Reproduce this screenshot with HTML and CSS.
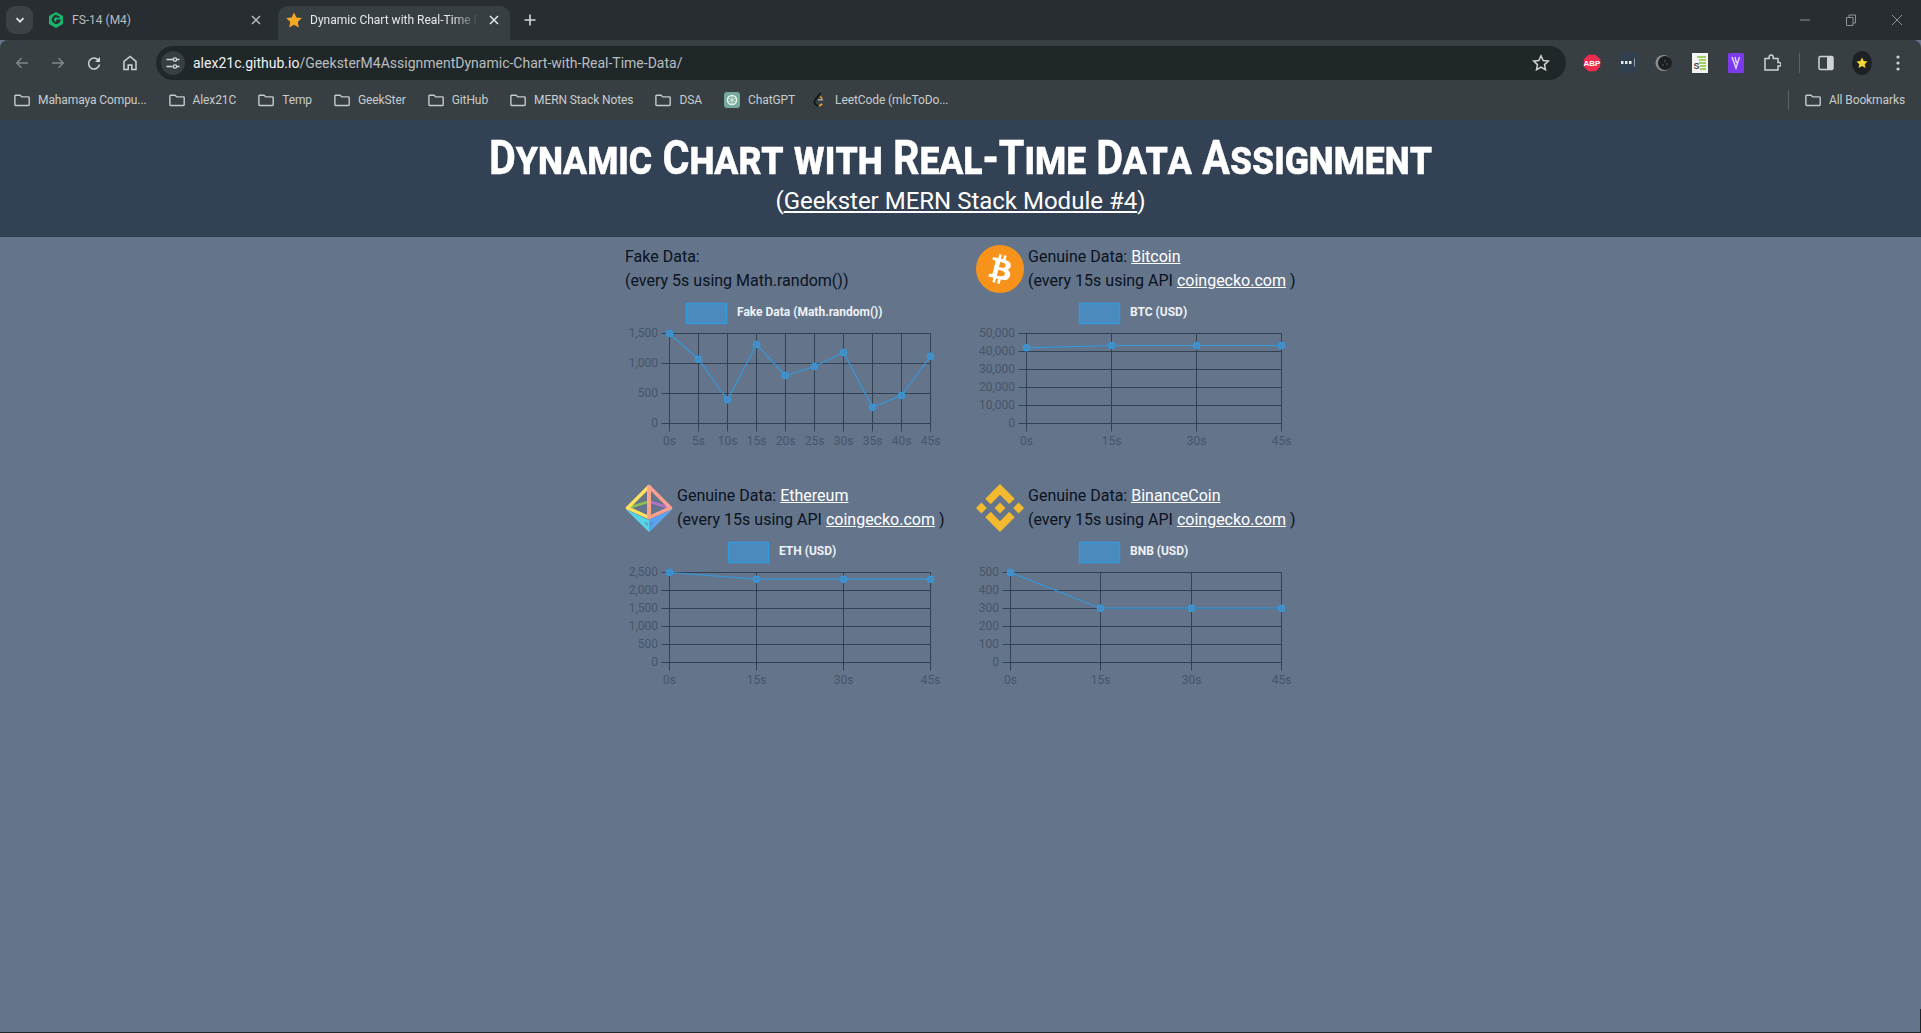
FILE: index.html
```html
<!DOCTYPE html>
<html lang="en">
<head>
<meta charset="utf-8">
<title>Dynamic Chart with Real-Time Data Assignment</title>
<link rel="stylesheet" href="styles.css">
</head>
<body>
<svg class="defs" width="0" height="0" aria-hidden="true">
  <symbol id="folder" viewBox="0 0 16 16"><path d="M1.5 3.2h4.6l1.6 1.7h6.8c.4 0 .7.3.7.7v7.2c0 .4-.3.7-.7.7H1.6c-.4 0-.7-.3-.7-.7V3.8c0-.3.3-.6.6-.6z" fill="none" stroke="#c6cacb" stroke-width="1.4"/></symbol>
  <symbol id="close" viewBox="0 0 16 16"><path d="M4 4l8 8M12 4l-8 8" fill="none" stroke="currentColor" stroke-width="1.5"/></symbol>
</svg>

<div class="tabstrip">
  <div class="tabsearch"><svg width="12" height="12" viewBox="0 0 12 12"><path d="M2.5 4.2L6 7.7l3.5-3.5" fill="none" stroke="#e3e5e6" stroke-width="1.7"/></svg></div>
  <div class="tab">
    <svg class="favicon" viewBox="0 0 16 16"><path d="M8 0l7 4v8l-7 4-7-4V4z" fill="#19b56f"/><path d="M11 5.800A3.300 3.300 0 1 0 11.300 8.600H8.300" fill="none" stroke="#272d30" stroke-width="2.200"/></svg>
    <span class="tab-title">FS-14 (M4)</span>
    <svg class="tab-close"><use href="#close"/></svg>
  </div>
  <div class="tab tab-active">
    <svg class="favicon" viewBox="0 0 16 16"><path d="M8 .4l2.400 5 5.400.7-4 3.800 1 5.500L8 12.700l-4.800 2.700 1-5.500-4-3.800 5.400-.7z" fill="#f5a623"/></svg>
    <span class="tab-title tab-fade">Dynamic Chart with Real-Time Data Assignment</span>
    <svg class="tab-close"><use href="#close"/></svg>
  </div>
  <div class="newtab"><svg width="16" height="16" viewBox="0 0 16 16"><path d="M8 2.500v11M2.500 8h11" stroke="#d5d8d9" stroke-width="1.600"/></svg></div>
  <div class="winctl">
    <svg width="16" height="16" viewBox="0 0 16 16"><path d="M3 8h10" stroke="#8d9294" stroke-width="1"/></svg>
    <svg width="16" height="16" viewBox="0 0 16 16"><path d="M3.500 5.500h6.500v8H3.500zM6 5.500V3h6.500v8H10" fill="none" stroke="#8d9294" stroke-width="1"/></svg>
    <svg width="16" height="16" viewBox="0 0 16 16"><path d="M3 3l10 10M13 3L3 13" stroke="#8d9294" stroke-width="1"/></svg>
  </div>
</div>

<div class="toolbar">
  <div class="tbtn"><svg width="16" height="16" viewBox="0 0 16 16"><path d="M14 8H3M7.500 3.200L2.700 8l4.800 4.800" fill="none" stroke="#80878a" stroke-width="1.500"/></svg></div>
  <div class="tbtn"><svg width="16" height="16" viewBox="0 0 16 16"><path d="M2 8h11M8.500 3.200L13.300 8l-4.800 4.800" fill="none" stroke="#80878a" stroke-width="1.500"/></svg></div>
  <div class="tbtn"><svg width="16" height="16" viewBox="0 0 16 16"><path d="M13.200 6.500A5.500 5.500 0 1 0 13.500 9.500" fill="none" stroke="#d0d3d4" stroke-width="1.500"/><path d="M14 2v5H9z" fill="#d0d3d4"/></svg></div>
  <div class="tbtn"><svg width="16" height="16" viewBox="0 0 16 16"><path d="M8 1.500L2 6.300V14.500h4.200v-4.500h3.600v4.500H14V6.300z" fill="none" stroke="#d0d3d4" stroke-width="1.500"/></svg></div>
  <div class="omnibox">
    <div class="sitechip"><svg width="16" height="16" viewBox="0 0 16 16"><path d="M1.500 4.500h7M1.500 11.500h6M12 11.500h2.500M11.500 4.500h3" stroke="#d5d8d9" stroke-width="1.400"/><circle cx="10" cy="4.500" r="1.700" fill="none" stroke="#d5d8d9" stroke-width="1.300"/><circle cx="10" cy="11.500" r="1.700" fill="none" stroke="#d5d8d9" stroke-width="1.300"/></svg></div>
    <span class="url"><span class="url-host">alex21c.github.io</span>/GeeksterM4AssignmentDynamic-Chart-with-Real-Time-Data/</span>
    <svg class="omni-star" width="18" height="18" viewBox="0 0 18 18"><path d="M9 1.800l2.200 4.700 5.100.6-3.800 3.500 1 5.100L9 13.200l-4.500 2.500 1-5.100-3.800-3.500 5.100-.6z" fill="none" stroke="#d0d3d4" stroke-width="1.500"/></svg>
  </div>
  <div class="extensions">
    <div class="tbtn"><svg width="18" height="18" viewBox="0 0 18 18"><path d="M5.300 .8h7.400L17.200 5.300v7.400l-4.500 4.500H5.300L.8 12.700V5.300z" fill="#ee2a4f"/><text class="ext-abp" x="9" y="12" text-anchor="middle">ABP</text></svg></div>
    <div class="tbtn"><svg width="18" height="20" viewBox="0 0 18 20"><rect width="18" height="20" rx="1" fill="#2f3f4e"/><path d="M2 8h2.500v3H2zM6 8h2.500v3H6zM10 8h2.500v3H10z" fill="#e6e8e9"/><path d="M15.500 5.500v8" stroke="#9aa3a8" stroke-width="1"/></svg></div>
    <div class="tbtn"><svg width="18" height="20" viewBox="0 0 18 20"><circle cx="8.500" cy="10" r="8" fill="#8a8f90"/><circle cx="10" cy="10" r="7" fill="#1c1d1f"/><circle cx="10" cy="8" r=".8" fill="#666"/><circle cx="12" cy="11" r=".8" fill="#666"/><circle cx="8" cy="12" r=".8" fill="#666"/></svg></div>
    <div class="tbtn"><svg width="16" height="20" viewBox="0 0 16 20"><rect width="16" height="20" fill="#f4f5f2"/><path d="M5 4h9M7 7h7M7 10h7M8 13h6M8 16h6" stroke="#86c232" stroke-width="1.300"/><text class="ext-s" x="1.500" y="16">S</text></svg></div>
    <div class="tbtn"><svg width="16" height="20" viewBox="0 0 16 20"><rect width="16" height="20" rx="1.500" fill="#7c3aed"/><path d="M4 4l4 11 3.500-11M7 4l1.500 6" fill="none" stroke="#e3d7ff" stroke-width="1.400"/></svg></div>
    <div class="tbtn"><svg width="18" height="18" viewBox="0 0 18 18"><path d="M2 4.500h4.200V3a2 2 0 0 1 4 0v1.500H15v4h1.200a1.800 1.800 0 0 1 0 3.600H15V16H2z" fill="none" stroke="#d0d3d4" stroke-width="1.500"/></svg></div>
    <div class="tsep"></div>
    <div class="tbtn"><svg width="16" height="16" viewBox="0 0 16 16"><rect x="1" y="1.500" width="14" height="13" rx="1.500" fill="none" stroke="#d0d3d4" stroke-width="1.500"/><rect x="9" y="1.500" width="6" height="13" fill="#d0d3d4"/></svg></div>
    <div class="tbtn"><svg width="20" height="24" viewBox="0 0 20 24"><ellipse cx="10" cy="12" rx="10" ry="12" fill="#1d2123"/><path d="M10 6.500l1.700 3.600 3.800.5-2.800 2.600.8 3.800-3.500-1.900-3.500 1.900.8-3.800L4.500 10.600l3.800-.5z" fill="#f7d731"/></svg></div>
    <div class="tbtn"><svg width="6" height="18" viewBox="0 0 6 18"><circle cx="3" cy="3" r="1.600" fill="#d0d3d4"/><circle cx="3" cy="9" r="1.600" fill="#d0d3d4"/><circle cx="3" cy="15" r="1.600" fill="#d0d3d4"/></svg></div>
  </div>
</div>

<div class="bookmarks">
  <div class="bm"><svg class="bm-icon"><use href="#folder"/></svg><span>Mahamaya Compu...</span></div>
  <div class="bm"><svg class="bm-icon"><use href="#folder"/></svg><span>Alex21C</span></div>
  <div class="bm"><svg class="bm-icon"><use href="#folder"/></svg><span>Temp</span></div>
  <div class="bm"><svg class="bm-icon"><use href="#folder"/></svg><span>GeekSter</span></div>
  <div class="bm"><svg class="bm-icon"><use href="#folder"/></svg><span>GitHub</span></div>
  <div class="bm"><svg class="bm-icon"><use href="#folder"/></svg><span>MERN Stack Notes</span></div>
  <div class="bm"><svg class="bm-icon"><use href="#folder"/></svg><span>DSA</span></div>
  <div class="bm"><svg class="bm-icon" viewBox="0 0 16 16"><rect width="16" height="16" rx="3" fill="#74aa9c"/><circle cx="8" cy="8" r="4.600" fill="none" stroke="#e8f1ee" stroke-width="1.500"/><path d="M8 3.500v9M4 5.700l8 4.600M12 5.700l-8 4.600" stroke="#e8f1ee" stroke-width=".8"/></svg><span>ChatGPT</span></div>
  <div class="bm bm-leet"><svg class="bm-icon" viewBox="0 0 16 16"><path d="M9.500 1L4 8c-1.500 2.200 0 5.500 3.500 6" fill="none" stroke="#111" stroke-width="1.500"/><path d="M7 7.800h5" stroke="#b4b8b9" stroke-width="1.300"/><path d="M9 4.500l2.300 2M8 14l3.300-2" stroke="#f5a623" stroke-width="1.500"/></svg><span>LeetCode (mlcToDo...</span></div>
  <div class="bm-right">
    <div class="bm-sep"></div>
    <div class="bm"><svg class="bm-icon"><use href="#folder"/></svg><span>All Bookmarks</span></div>
  </div>
</div>

<header class="page-header">
  <h1 class="title">Dynamic Chart with Real-Time Data Assignment</h1>
  <p class="subtitle">(<a href="#">Geekster MERN Stack Module #4</a>)</p>
</header>

<main class="charts">

  <section class="cell">
    <div class="cell-head">
      <div class="cell-text">
        <div>Fake Data:</div>
        <div>(every 5s using Math.random())</div>
      </div>
    </div>
    <svg class="chart" viewBox="0 0 319 160">
      <rect class="legend-box" x="61.500" y="10.500" width="40" height="20"/>
      <text class="legend-text" x="112" y="22.500">Fake Data (Math.random())</text>
      <path class="grid" d="M36.500 40.500H305.500M36.500 70.500H305.500M36.500 100.500H305.500M36.500 130.500H305.500M44.500 40.500V138.500M73.500 40.500V138.500M102.500 40.500V138.500M131.500 40.500V138.500M160.500 40.500V138.500M189.500 40.500V138.500M218.500 40.500V138.500M247.500 40.500V138.500M276.500 40.500V138.500M305.500 40.500V138.500"/>
      <g class="ylabels">
        <text x="33" y="43.500">1,500</text><text x="33" y="73.500">1,000</text><text x="33" y="103.500">500</text><text x="33" y="133.500">0</text>
      </g>
      <g class="xlabels">
        <text x="44.500" y="152">0s</text><text x="73.500" y="152">5s</text><text x="102.500" y="152">10s</text><text x="131.500" y="152">15s</text><text x="160.500" y="152">20s</text><text x="189.500" y="152">25s</text><text x="218.500" y="152">30s</text><text x="247.500" y="152">35s</text><text x="276.500" y="152">40s</text><text x="305.500" y="152">45s</text>
      </g>
      <polyline class="line" points="44.500,40.500 73.500,66.200 102.500,106.800 131.500,51.500 160.500,82.500 189.500,73.500 218.500,59.500 247.500,114.200 276.500,102.500 305.500,63.200"/>
      <g class="points">
        <circle cx="44.500" cy="40.500" r="3"/><circle cx="73.500" cy="66.200" r="3"/><circle cx="102.500" cy="106.800" r="3"/><circle cx="131.500" cy="51.500" r="3"/><circle cx="160.500" cy="82.500" r="3"/><circle cx="189.500" cy="73.500" r="3"/><circle cx="218.500" cy="59.500" r="3"/><circle cx="247.500" cy="114.200" r="3"/><circle cx="276.500" cy="102.500" r="3"/><circle cx="305.500" cy="63.200" r="3"/>
      </g>
    </svg>
  </section>

  <section class="cell">
    <div class="cell-head">
      <svg class="coin" viewBox="0 0 32 32"><circle cx="16" cy="16" r="16" fill="#f7931a"/><path fill="#fff" d="M23.189 14.020c.314-2.096-1.283-3.223-3.465-3.975l.708-2.840-1.728-.430-.690 2.765c-.454-.114-.920-.220-1.385-.326l.695-2.783L15.596 6l-.708 2.839c-.376-.086-.746-.170-1.104-.260l.002-.009-2.384-.595-.460 1.846s1.283.294 1.256.312c.700.175.826.638.805 1.006l-.806 3.235c.048.012.110.030.180.057l-.183-.045-1.130 4.532c-.086.212-.303.531-.793.410.018.025-1.256-.313-1.256-.313l-.858 1.978 2.250.561c.418.105.828.215 1.231.318l-.715 2.872 1.727.430.708-2.840c.472.127.930.245 1.378.357l-.706 2.828 1.728.430.715-2.866c2.948.558 5.164.333 6.097-2.333.752-2.146-.037-3.385-1.588-4.192 1.130-.260 1.980-1.003 2.207-2.538zm-3.950 5.538c-.533 2.147-4.148.986-5.320.695l.950-3.805c1.172.293 4.929.872 4.370 3.110zm.535-5.569c-.487 1.953-3.495.960-4.470.717l.860-3.450c.975.243 4.118.696 3.610 2.733z"/></svg>
      <div class="cell-text">
        <div>Genuine Data: <a href="#">Bitcoin</a></div>
        <div>(every 15s using API <a href="#">coingecko.com</a> )</div>
      </div>
    </div>
    <svg class="chart" viewBox="0 0 319 160">
      <rect class="legend-box" x="103.500" y="10.500" width="40" height="20"/>
      <text class="legend-text" x="154" y="22.500">BTC (USD)</text>
      <path class="grid" d="M42.500 40.500H305.500M42.500 58.500H305.500M42.500 76.500H305.500M42.500 94.500H305.500M42.500 112.500H305.500M42.500 130.500H305.500M50.500 40.500V138.500M135.500 40.500V138.500M220.500 40.500V138.500M305.500 40.500V138.500"/>
      <g class="ylabels">
        <text x="39" y="43.500">50,000</text><text x="39" y="61.500">40,000</text><text x="39" y="79.500">30,000</text><text x="39" y="97.500">20,000</text><text x="39" y="115.500">10,000</text><text x="39" y="133.500">0</text>
      </g>
      <g class="xlabels">
        <text x="50.500" y="152">0s</text><text x="135.500" y="152">15s</text><text x="220.500" y="152">30s</text><text x="305.500" y="152">45s</text>
      </g>
      <polyline class="line" points="50.500,54.800 135.500,52.500 220.500,52.500 305.500,52.500"/>
      <g class="points">
        <circle cx="50.500" cy="54.800" r="3"/><circle cx="135.500" cy="52.500" r="3"/><circle cx="220.500" cy="52.500" r="3"/><circle cx="305.500" cy="52.500" r="3"/>
      </g>
    </svg>
  </section>

  <section class="cell">
    <div class="cell-head">
      <svg class="coin" viewBox="0 0 48 48">
        <path d="M1 25.500L24 48 47 25.500 24 36z" fill="#54d6e8"/>
        <path d="M47 25.500L24 48V36z" fill="#5aa2f0"/>
        <path d="M19 37.500l3.500 1.200v3.800z" fill="#64748b" opacity=".6"/>
        <path d="M29 37.500l-3.500 1.200v3.800z" fill="#64748b" opacity=".6"/>
        <path d="M3 24l21-6.500" fill="none" stroke="#8fc04f" stroke-width="2.500"/>
        <path d="M45 24l-21-6.500" fill="none" stroke="#b56fc8" stroke-width="2.500"/>
        <path d="M24 2.500L2.500 24 24 33.500z" fill="none" stroke="#ffe25f" stroke-width="3.500" stroke-linejoin="round"/>
        <path d="M24 2.500L45.500 24 24 33.500z" fill="none" stroke="#ff9f8f" stroke-width="3.500" stroke-linejoin="round"/>
      </svg>
      <div class="cell-text">
        <div>Genuine Data: <a href="#">Ethereum</a></div>
        <div>(every 15s using API <a href="#">coingecko.com</a> )</div>
      </div>
    </div>
    <svg class="chart" viewBox="0 0 319 160">
      <rect class="legend-box" x="103.500" y="10.500" width="40" height="20"/>
      <text class="legend-text" x="154" y="22.500">ETH (USD)</text>
      <path class="grid" d="M36.500 40.500H305.500M36.500 58.500H305.500M36.500 76.500H305.500M36.500 94.500H305.500M36.500 112.500H305.500M36.500 130.500H305.500M44.500 40.500V138.500M131.500 40.500V138.500M218.500 40.500V138.500M305.500 40.500V138.500"/>
      <g class="ylabels">
        <text x="33" y="43.500">2,500</text><text x="33" y="61.500">2,000</text><text x="33" y="79.500">1,500</text><text x="33" y="97.500">1,000</text><text x="33" y="115.500">500</text><text x="33" y="133.500">0</text>
      </g>
      <g class="xlabels">
        <text x="44.500" y="152">0s</text><text x="131.500" y="152">15s</text><text x="218.500" y="152">30s</text><text x="305.500" y="152">45s</text>
      </g>
      <polyline class="line" points="44.500,40.500 131.500,47.200 218.500,47.200 305.500,47.200"/>
      <g class="points">
        <circle cx="44.500" cy="40.500" r="3"/><circle cx="131.500" cy="47.200" r="3"/><circle cx="218.500" cy="47.200" r="3"/><circle cx="305.500" cy="47.200" r="3"/>
      </g>
    </svg>
  </section>

  <section class="cell">
    <div class="cell-head">
      <svg class="coin" viewBox="0 0 24 24"><path fill="#f3ba2f" d="M16.624 13.920l2.717 2.716-7.353 7.353-7.353-7.352 2.717-2.717 4.636 4.660 4.636-4.660zm4.637-4.636L24 12l-2.715 2.716L18.568 12l2.693-2.716zm-9.272.001l2.716 2.691-2.716 2.718v-.001L9.272 12l2.716-2.715zm-9.272-.001L5.409 12l-2.692 2.692L0 12l2.716-2.716zM11.988.011l7.353 7.329-2.717 2.716-4.636-4.636-4.635 4.660-2.718-2.716 7.353-7.353z"/></svg>
      <div class="cell-text">
        <div>Genuine Data: <a href="#">BinanceCoin</a></div>
        <div>(every 15s using API <a href="#">coingecko.com</a> )</div>
      </div>
    </div>
    <svg class="chart" viewBox="0 0 319 160">
      <rect class="legend-box" x="103.500" y="10.500" width="40" height="20"/>
      <text class="legend-text" x="154" y="22.500">BNB (USD)</text>
      <path class="grid" d="M26.500 40.500H305.500M26.500 58.500H305.500M26.500 76.500H305.500M26.500 94.500H305.500M26.500 112.500H305.500M26.500 130.500H305.500M34.500 40.500V138.500M124.500 40.500V138.500M215.500 40.500V138.500M305.500 40.500V138.500"/>
      <g class="ylabels">
        <text x="23" y="43.500">500</text><text x="23" y="61.500">400</text><text x="23" y="79.500">300</text><text x="23" y="97.500">200</text><text x="23" y="115.500">100</text><text x="23" y="133.500">0</text>
      </g>
      <g class="xlabels">
        <text x="34.500" y="152">0s</text><text x="124.500" y="152">15s</text><text x="215.500" y="152">30s</text><text x="305.500" y="152">45s</text>
      </g>
      <polyline class="line" points="34.500,40.500 124.500,76.200 215.500,76.200 305.500,76.200"/>
      <g class="points">
        <circle cx="34.500" cy="40.500" r="3"/><circle cx="124.500" cy="76.200" r="3"/><circle cx="215.500" cy="76.200" r="3"/><circle cx="305.500" cy="76.200" r="3"/>
      </g>
    </svg>
  </section>

</main>
<div class="edge-mark"></div>
</body>
</html>
```

FILE: styles.css
```css
* { box-sizing: border-box; }
html, body { margin: 0; padding: 0; }
body {
  height: 1033px;
  overflow: hidden;
  position: relative;
  background: #64748b;
  font-family: Roboto, sans-serif;
  display: flex;
  flex-direction: column;
  border-bottom: 1px solid #20272a;
}
.defs { position: absolute; }

/* browser chrome */
.tabstrip {
  height: 40px;
  flex: none;
  background: #272d30;
  display: flex;
  align-items: flex-end;
  padding-left: 6px;
  font: 12px Roboto, sans-serif;
}
.tabsearch {
  width: 27px;
  height: 28px;
  margin-bottom: 6px;
  border-radius: 9px;
  background: #3b4144;
  display: flex;
  align-items: center;
  justify-content: center;
}
.tab {
  width: 245px;
  height: 34px;
  padding: 0 14px 6px 15px;
  display: flex;
  align-items: center;
  color: #b9bdbf;
  border-radius: 10px 10px 0 0;
}
.tab-active {
  width: 232px;
  padding: 0 8px 6px 8px;
  background: #373f42;
  color: #e6e8e9;
}
.favicon { width: 16px; height: 16px; flex: none; }
.tab-title { margin-left: 8px; flex: 1; white-space: nowrap; overflow: hidden; }
.tab-fade { -webkit-mask-image: linear-gradient(90deg, #000 85%, transparent 100%); mask-image: linear-gradient(90deg, #000 85%, transparent 100%); }
.tab-close { width: 16px; height: 16px; flex: none; margin-left: 8px; }
.newtab { margin: 0 0 12px 12px; width: 16px; height: 16px; }
.winctl {
  margin-left: auto;
  width: 138px;
  align-self: stretch;
  padding: 12px 16px 0 0;
  display: flex;
  justify-content: flex-end;
  gap: 30px;
}

.toolbar {
  height: 44px;
  flex: none;
  background: #373f42;
  border-radius: 8px 8px 0 0;
  padding: 6px 5px 4px 4px;
  display: flex;
  align-items: stretch;
}
.tbtn {
  width: 36px;
  display: flex;
  align-items: center;
  justify-content: center;
  flex: none;
}
.omnibox {
  width: 1410px;
  margin-left: 8px;
  flex: none;
  border-radius: 17px;
  background: #202729;
  display: flex;
  align-items: center;
  padding: 0 16px 0 5px;
}
.sitechip {
  width: 24px;
  height: 24px;
  border-radius: 50%;
  background: #373f42;
  display: flex;
  align-items: center;
  justify-content: center;
}
.url {
  margin-left: 8px;
  flex: 1;
  font: 14px Roboto, sans-serif;
  color: #b9bdbf;
  white-space: nowrap;
}
.url-host { color: #f1f2f3; }
.omni-star { flex: none; }
.extensions { margin-left: 8px; display: flex; align-items: stretch; }
.tsep { width: 18px; display: flex; position: relative; }
.tsep::after { content: ""; width: 1px; height: 20px; margin: 7px auto 0; background: #5b6366; }
.ext-abp { font: bold 8px "Liberation Sans", sans-serif; fill: #fff; }
.ext-s { font: bold 9px "Liberation Sans", sans-serif; fill: #444; }

.bookmarks {
  height: 36px;
  flex: none;
  background: #373f42;
  display: flex;
  align-items: center;
  padding: 0 16px 4px 14px;
  gap: 22px;
  font: 12px Roboto, sans-serif;
  letter-spacing: -.1px;
  color: #c9cccd;
  white-space: nowrap;
}
.bm { display: flex; align-items: center; gap: 8px; }
.bm-leet { margin-left: -6px; }
.bm-icon { width: 16px; height: 16px; flex: none; }
.bm-right { margin-left: auto; display: flex; align-items: center; gap: 16px; }
.bm-sep { width: 1px; height: 20px; background: #5b6366; }

/* page */
.page-header {
  flex: none;
  height: 117px;
  background: #334155;
  color: #fff;
  text-align: center;
  padding-top: 10px;
  border-bottom: 1px solid #2d3a4c;
}
.title {
  margin: 0 0 1px;
  font-size: 48px;
  line-height: 56px;
  font-weight: 700;
  font-variant: small-caps;
  white-space: nowrap;
  -webkit-text-stroke: .5px #fff;
  transform: scaleX(.86);
}
.subtitle {
  margin: 0;
  font-size: 24px;
  line-height: 29px;
}
a { color: inherit; text-decoration: underline; }

.charts {
  width: 671px;
  margin: 8px auto 0;
  display: grid;
  grid-template-columns: 319px 319px;
  column-gap: 32px;
  row-gap: 31px;
}
.cell-head {
  height: 48px;
  display: flex;
  gap: 4px;
}
.coin { width: 48px; height: 48px; flex: none; }
.cell-text {
  font-size: 16px;
  line-height: 24px;
  color: #0b1220;
  white-space: nowrap;
}
.cell-text a { color: #fff; }
.chart { display: block; width: 319px; height: 160px; }
.legend-box { fill: #4b8abd; stroke: #3498db; stroke-width: 1.500; }
.legend-text { font: 700 12px Roboto, sans-serif; fill: #eef2f6; }
.grid { fill: none; stroke: #334155; stroke-width: 1; }
.ylabels text { font: 12px Roboto, sans-serif; fill: #475569; text-anchor: end; }
.xlabels text { font: 12px Roboto, sans-serif; fill: #475569; text-anchor: middle; }
.line { fill: none; stroke: #3498db; stroke-width: 1.200; }
.points circle { fill: #4b8abd; stroke: #3498db; stroke-width: 1.500; }

.edge-mark {
  position: absolute;
  right: 0;
  bottom: 0;
  width: 1px;
  height: 23px;
  background: #20272a;
}
```
